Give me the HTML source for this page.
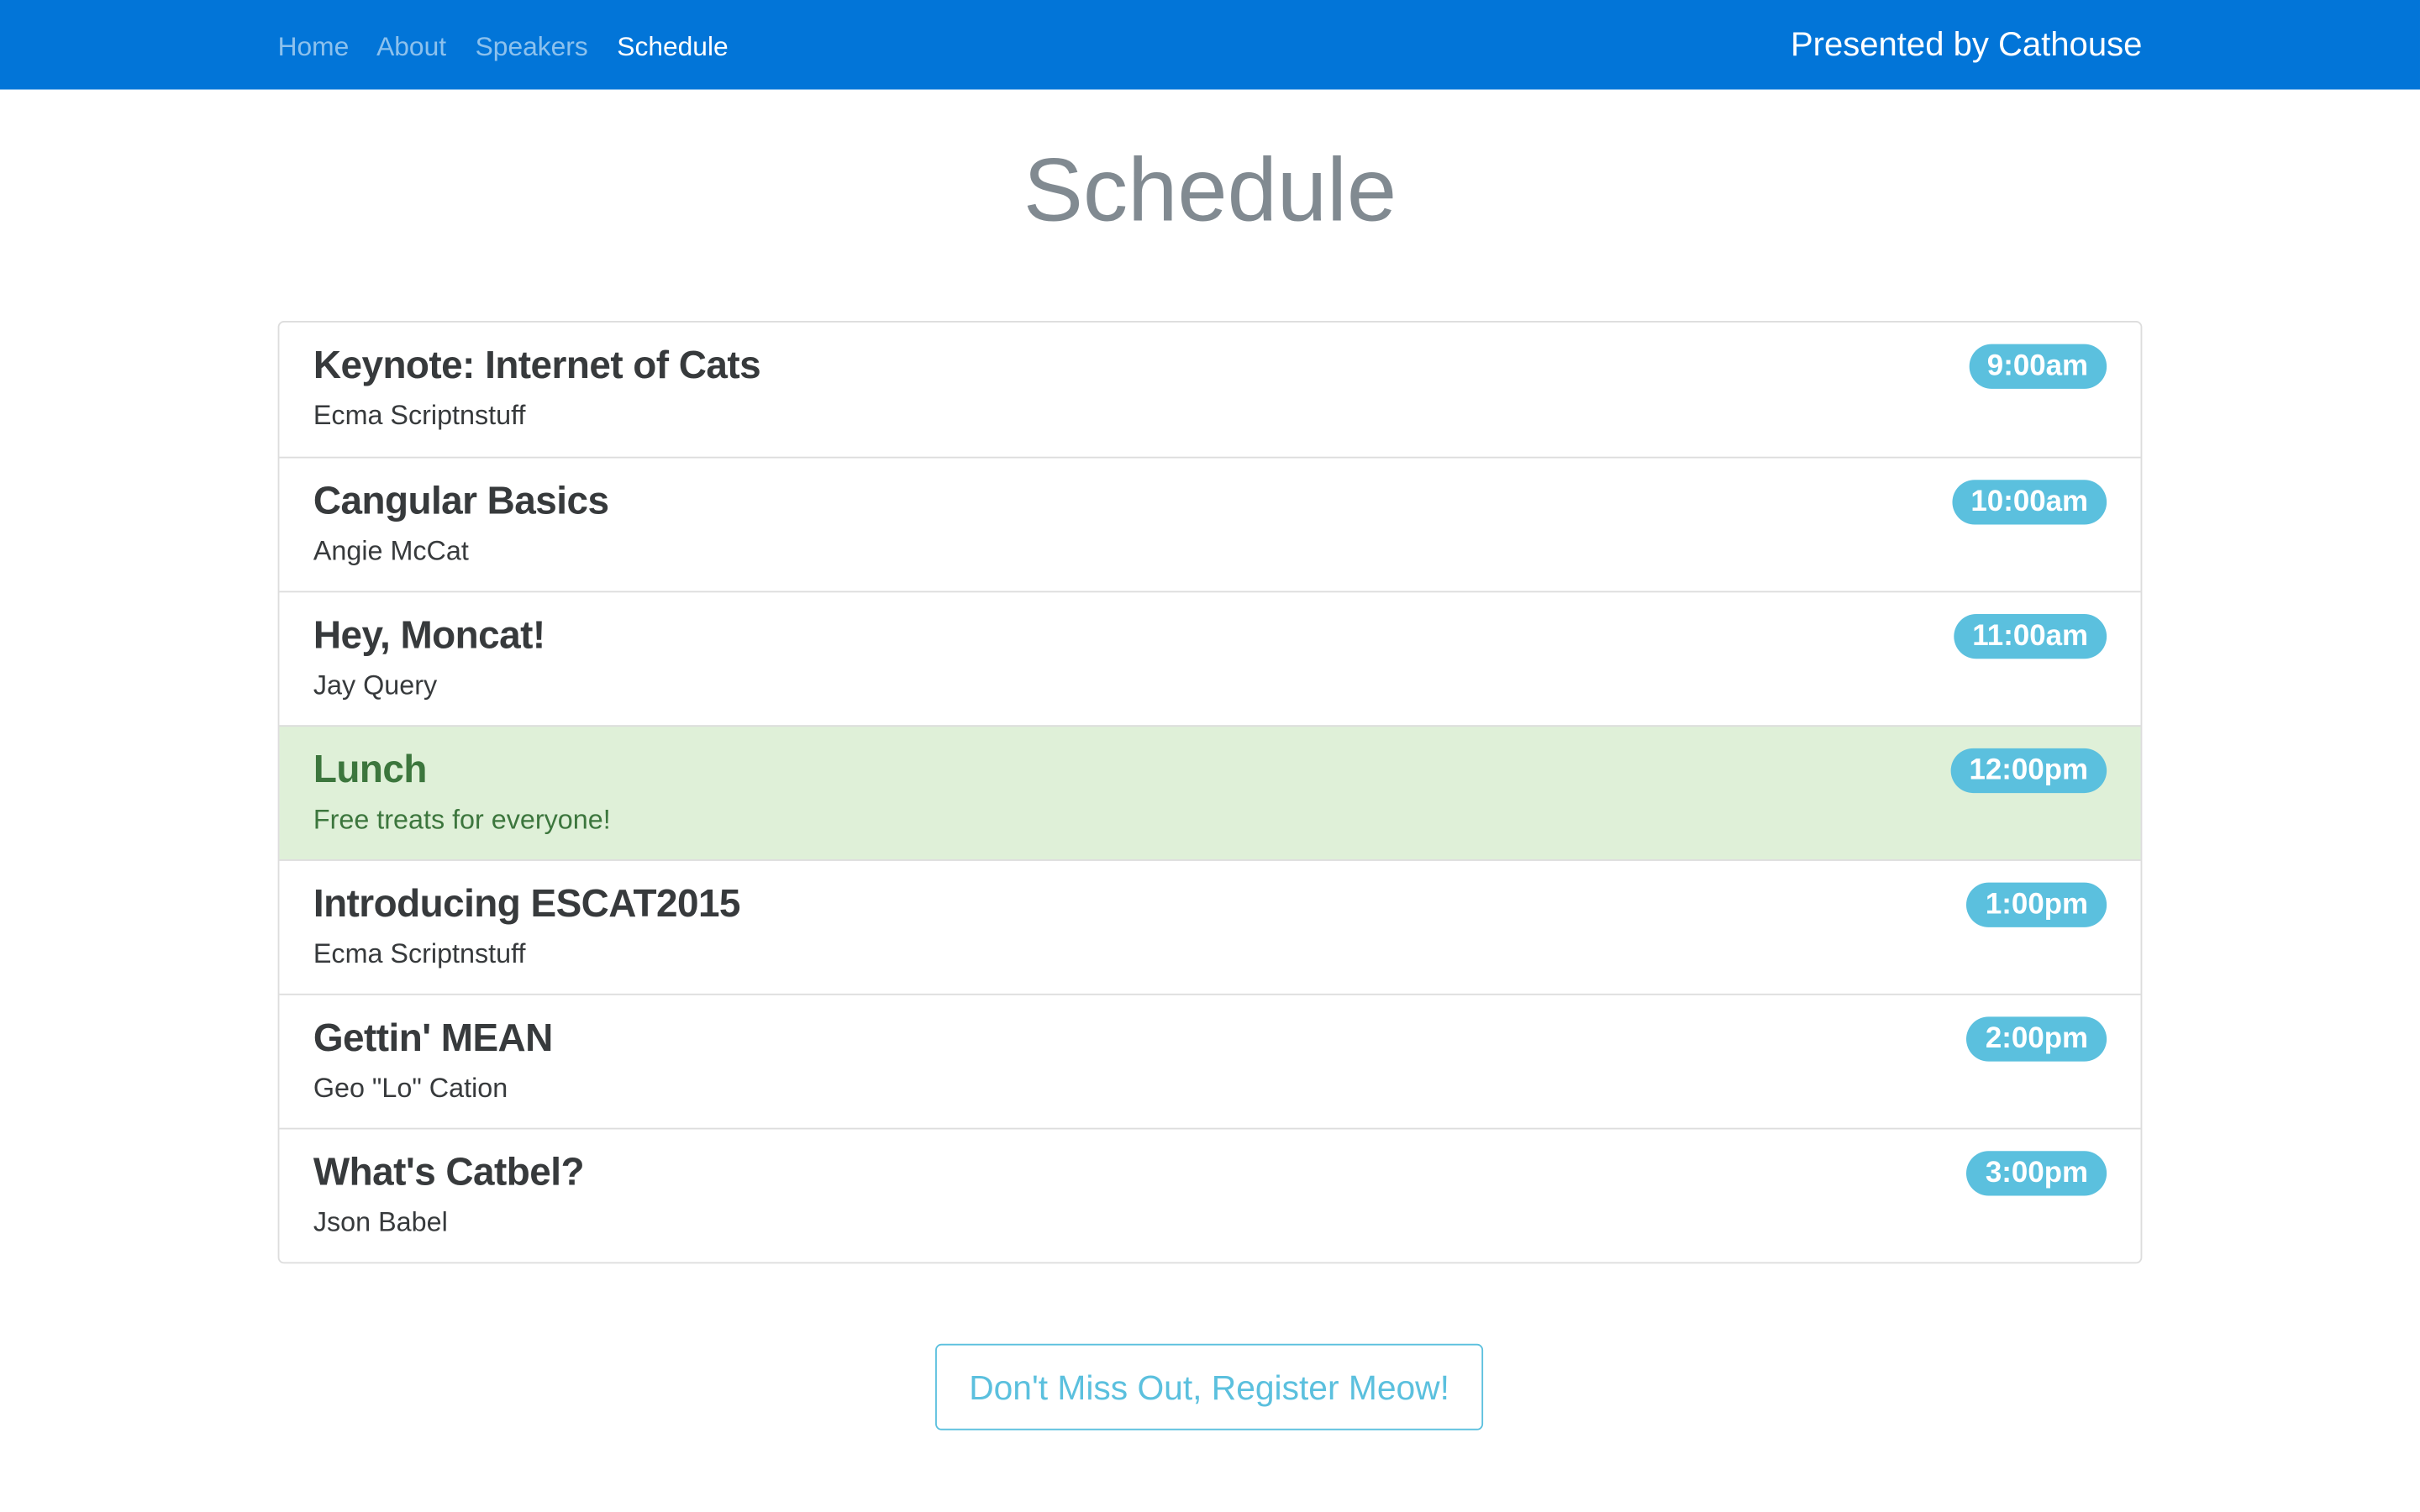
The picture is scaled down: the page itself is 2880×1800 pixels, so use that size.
<!DOCTYPE html>
<html><head><meta charset="utf-8"><style>
html,body{margin:0;padding:0;width:2880px;height:1800px;overflow:hidden;background:#fff}
#w{width:1568px;height:980px;transform:scale(1.83673);transform-origin:0 0;position:relative;font-family:"Liberation Sans",sans-serif;color:#373a3c}
.nav{position:absolute;left:0;top:0;width:1568px;height:58px;background:#0275d8}
.nav .l{position:absolute;top:20px;font-size:17.3px;color:rgba(255,255,255,.55);line-height:20px}
.nav .l span{margin-right:14px}
.nav .l span.a{color:#fff}
.nav .r{position:absolute;right:180px;top:17px;font-size:21.8px;color:#fff;line-height:24px}
h1{position:absolute;left:0;width:1568px;top:88px;margin:0;text-align:center;font-size:58px;font-weight:300;color:#818a91;line-height:72px}
.list{position:absolute;left:180px;top:208px;width:1206px;border:1px solid #ddd;border-radius:4px;overflow:hidden}
.row{height:86px;border-top:1px solid #ddd;position:relative}
.row:first-child{border-top:none;height:87px}
.row .t{position:absolute;left:22px;top:13px;font-size:25px;line-height:30px;font-weight:bold;letter-spacing:-0.3px}
.row .s{position:absolute;left:22px;top:49px;font-size:17.6px;line-height:22px}
.row .b{position:absolute;right:22px;top:14px;height:29px;line-height:30px;padding:0 12px;border-radius:15px;background:#5bc0de;color:#fff;font-weight:bold;font-size:19px}
.row.g{background:#dff0d8;color:#3c763d}
.btn{position:absolute;left:606px;top:871px;width:353px;height:54px;border:1px solid #5bc0de;border-radius:4px;color:#5bc0de;font-size:22.2px;line-height:56px;text-align:center}
</style></head><body><div id="w">
<div class="nav"><div class="l" style="left:180px"><span>Home</span> <span>About</span> <span>Speakers</span> <span class="a">Schedule</span></div><div class="r">Presented by Cathouse</div></div>
<h1>Schedule</h1>
<div class="list">
<div class="row"><div class="t">Keynote: Internet of Cats</div><div class="s">Ecma Scriptnstuff</div><div class="b">9:00am</div></div>
<div class="row"><div class="t">Cangular Basics</div><div class="s">Angie McCat</div><div class="b">10:00am</div></div>
<div class="row"><div class="t">Hey, Moncat!</div><div class="s">Jay Query</div><div class="b">11:00am</div></div>
<div class="row g"><div class="t">Lunch</div><div class="s">Free treats for everyone!</div><div class="b">12:00pm</div></div>
<div class="row"><div class="t">Introducing ESCAT2015</div><div class="s">Ecma Scriptnstuff</div><div class="b">1:00pm</div></div>
<div class="row"><div class="t">Gettin' MEAN</div><div class="s">Geo "Lo" Cation</div><div class="b">2:00pm</div></div>
<div class="row"><div class="t">What's Catbel?</div><div class="s">Json Babel</div><div class="b">3:00pm</div></div>
</div>
<div class="btn">Don't Miss Out, Register Meow!</div>
</div></body></html>
